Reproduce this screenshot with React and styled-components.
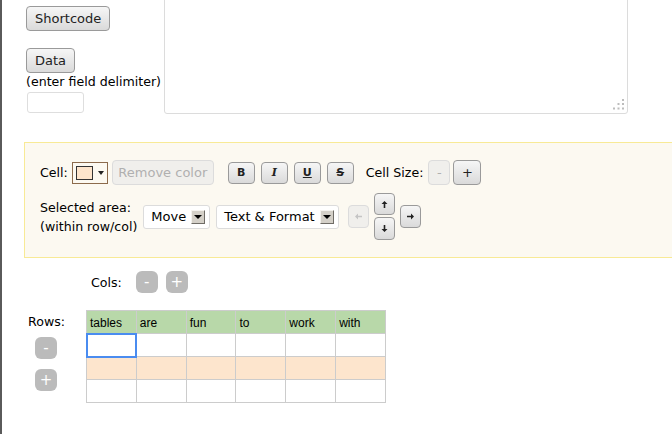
import React from 'react';
import styled, { createGlobalStyle } from 'styled-components';

const GlobalStyle = createGlobalStyle`
    html, body {
        margin: 0;
        padding: 0;
        background: #fff;
        overflow: hidden;
    }

    body {
        font-family: "DejaVu Sans", Verdana, sans-serif;
        font-size: 12.6px;
        color: #000;
    }
`;

const Page = styled.div`
    height: 434px;
    box-sizing: border-box;
    border-left: 2px solid #5a5a5a;
    overflow: hidden;
`;

const TopSection = styled.div`
    display: flex;
    align-items: flex-start;
    padding-left: 24px;
`;

const SideColumn = styled.div`
    width: 138px;
    padding-top: 6px;
    display: flex;
    flex-direction: column;
    align-items: flex-start;
`;

const Button = styled.button`
    font-family: "DejaVu Sans", Verdana, sans-serif;
    font-size: 13px;
    height: ${(p) => p.$h || 25}px;
    min-width: ${(p) => p.$w || 0}px;
    padding: 0 ${(p) => (p.$w ? 0 : 8)}px;
    margin-top: ${(p) => p.$mt || 0}px;
    box-sizing: border-box;
    border: 1px solid ${(p) => (p.disabled ? '#dcdcdc' : '#9a9a9a')};
    border-radius: 4px;
    background: ${(p) => (p.disabled ? '#f0efec' : 'linear-gradient(#f6f6f6, #e8e8e8 50%, #dadada)')};
    color: ${(p) => (p.disabled ? '#b0b0b0' : '#222')};
    display: inline-flex;
    align-items: center;
    justify-content: center;
    flex-shrink: 0;
`;

const Hint = styled.div`
    margin-top: 1px;
    line-height: 15px;
    white-space: nowrap;
`;

const SmallInput = styled.input`
    margin: 3px 0 0 1px;
    width: 57px;
    height: 21px;
    box-sizing: border-box;
    border: 1px solid #dedede;
    border-radius: 3px;
    background: #fff;
`;

const AreaWrap = styled.div`
    position: relative;
    margin-top: -6px;
`;

const TextArea = styled.textarea`
    display: block;
    width: 464px;
    height: 120px;
    box-sizing: border-box;
    border: 1px solid #dcdcdc;
    border-radius: 3px;
    resize: none;
    background: #fff;
`;

const Grip = styled.svg`
    position: absolute;
    right: 4px;
    bottom: 4px;
`;

const Panel = styled.div`
    margin: 28px 0 0 22px;
    width: 700px;
    height: 116px;
    box-sizing: border-box;
    border: 1px solid #f8ea96;
    background: #fcf9f1;
    padding: 17px 0 0 15px;
`;

const ToolRow = styled.div`
    display: flex;
    align-items: center;
    margin-top: ${(p) => p.$mt || 0}px;
`;

const Label = styled.span`
    white-space: nowrap;
    line-height: ${(p) => p.$lh || 15}px;
    margin-right: ${(p) => p.$mr || 0}px;
`;

const Swatch = styled.div`
    width: 36px;
    height: 22px;
    box-sizing: border-box;
    border: 1px solid #8c6b4c;
    display: flex;
    align-items: center;
    padding-left: 3px;
    gap: 5px;
    margin-right: 4px;
    background: #fcf9f1;

    & > i {
        display: block;
        width: 17px;
        height: 14px;
        box-sizing: border-box;
        border: 1px solid #333;
        background: #fde5cc;
    }
`;

const Caret = styled.span`
    width: 0;
    height: 0;
    border-left: 3px solid transparent;
    border-right: 3px solid transparent;
    border-top: 4px solid #222;
`;

const FormatButton = styled(Button)`
    width: 27px;
    height: 22px;
    padding: 0;
    font-size: 11px;
    font-weight: bold;
    margin-right: ${(p) => p.$mr || 6}px;
    font-style: ${(p) => (p.$italic ? 'italic' : 'normal')};
    text-decoration: ${(p) => p.$deco || 'none'};
`;

const Select = styled.div`
    display: flex;
    align-items: center;
    height: 24px;
    box-sizing: border-box;
    border: 1px solid #dcdcdc;
    border-radius: 3px;
    background: #fff;
    font-size: 13px;
    padding: 0 4px 0 7px;
    gap: 5px;
    margin-right: ${(p) => p.$mr || 0}px;
    white-space: nowrap;
`;

const DropBox = styled.span`
    width: 14px;
    height: 14px;
    box-sizing: border-box;
    background: #d4d0c8;
    border: 1px solid;
    border-color: #f4f2ee #6f6c66 #6f6c66 #f4f2ee;
    display: flex;
    align-items: center;
    justify-content: center;

    &::after {
        content: '';
        border-left: 4px solid transparent;
        border-right: 4px solid transparent;
        border-top: 4px solid #000;
    }
`;

const ArrowStack = styled.div`
    display: flex;
    flex-direction: column;
    gap: 2px;
    margin: 0 5px;
`;

const ArrowButton = styled(Button)`
    width: 21px;
    height: ${(p) => p.$h || 23}px;
    padding: 0;
`;

const CountRow = styled.div`
    display: flex;
    align-items: center;
    margin-top: 13px;
    padding-left: 89px;
`;

const RoundButton = styled.button`
    width: 22px;
    height: 22px;
    padding: 0;
    border: none;
    border-radius: 6px;
    background: #bbbbbb;
    color: #fff;
    font-family: "DejaVu Sans", Verdana, sans-serif;
    font-size: 15px;
    line-height: 22px;
    margin-left: ${(p) => p.$ml || 0}px;
    margin-top: ${(p) => p.$mt || 0}px;
`;

const TableSection = styled.div`
    display: flex;
    align-items: flex-start;
    margin-top: 17px;
    padding-left: 26px;
`;

const RowsColumn = styled.div`
    width: 40px;
    padding-top: 4px;
    display: flex;
    flex-direction: column;
    align-items: flex-start;
    margin-right: 18px;

    & > button {
        margin-left: 7px;
    }
`;

const Grid = styled.table`
    border-collapse: collapse;
    table-layout: fixed;
    width: 300px;
    font-family: "Liberation Sans", Arial, sans-serif;
    font-size: 12px;
`;

const Cell = styled.td`
    height: 23px;
    box-sizing: border-box;
    border: 1px solid #cccccc;
    padding: 1px 0 0 3px;
    background: ${(p) => p.$bg || '#fff'};
    outline: ${(p) => (p.$active ? '2px solid #4a8cf0' : 'none')};
    outline-offset: -1px;
`;

function Arrow({ dir, color }) {
    const rot = { up: 0, right: 90, down: 180, left: 270 }[dir];
    return (
        <svg width="9" height="9" viewBox="0 0 9 9" style={{ transform: `rotate(${rot}deg)` }}>
            <path d="M4.5 1 L1.5 4 H3.7 V8 H5.3 V4 H7.5 Z" fill={color} />
        </svg>
    );
}

const header = ['tables', 'are', 'fun', 'to', 'work', 'with'];
const rows = [{ bg: '#fff' }, { bg: '#fde5cd' }, { bg: '#fff' }];

function App() {
    return (
        <Page>
            <GlobalStyle />
            <TopSection>
                <SideColumn>
                    <Button>Shortcode</Button>
                    <Button $mt={17}>Data</Button>
                    <Hint>(enter field delimiter)</Hint>
                    <SmallInput />
                </SideColumn>
                <AreaWrap>
                    <TextArea />
                    <Grip width="11" height="11" viewBox="0 0 11 11">
                        <rect x="9" y="0" width="2" height="2" fill="#bdbdbd" />
                        <rect x="4.5" y="4" width="2" height="2" fill="#bdbdbd" />
                        <rect x="9" y="4" width="2" height="2" fill="#bdbdbd" />
                        <rect x="0" y="8.5" width="2" height="2" fill="#bdbdbd" />
                        <rect x="4.5" y="8.5" width="2" height="2" fill="#bdbdbd" />
                        <rect x="9" y="8.5" width="2" height="2" fill="#bdbdbd" />
                    </Grip>
                </AreaWrap>
            </TopSection>

            <Panel>
                <ToolRow>
                    <Label $mr={4}>Cell:</Label>
                    <Swatch>
                        <i />
                        <Caret />
                    </Swatch>
                    <Button disabled $w={102} style={{ marginRight: 14 }}>Remove color</Button>
                    <FormatButton>B</FormatButton>
                    <FormatButton $italic style={{ fontFamily: '"DejaVu Serif", serif' }}>I</FormatButton>
                    <FormatButton $deco="underline">U</FormatButton>
                    <FormatButton $deco="line-through" $mr={12}>S</FormatButton>
                    <Label $mr={5}>Cell Size:</Label>
                    <Button disabled $w={22} style={{ marginRight: 3, padding: 0 }}>-</Button>
                    <Button $w={28} style={{ padding: 0 }}>+</Button>
                </ToolRow>
                <ToolRow $mt={8}>
                    <Label $lh={19} $mr={6}>
                        Selected area:
                        <br />
                        (within row/col)
                    </Label>
                    <Select $mr={6}>
                        Move
                        <DropBox />
                    </Select>
                    <Select $mr={9}>
                        Text &amp; Format
                        <DropBox />
                    </Select>
                    <ArrowButton disabled>
                        <Arrow dir="left" color="#c4c4c4" />
                    </ArrowButton>
                    <ArrowStack>
                        <ArrowButton $h={22}>
                            <Arrow dir="up" color="#222" />
                        </ArrowButton>
                        <ArrowButton $h={23}>
                            <Arrow dir="down" color="#222" />
                        </ArrowButton>
                    </ArrowStack>
                    <ArrowButton>
                        <Arrow dir="right" color="#222" />
                    </ArrowButton>
                </ToolRow>
            </Panel>

            <CountRow>
                <Label $mr={14}>Cols:</Label>
                <RoundButton>-</RoundButton>
                <RoundButton $ml={8}>+</RoundButton>
            </CountRow>

            <TableSection>
                <RowsColumn>
                    <Label>Rows:</Label>
                    <RoundButton $mt={8}>-</RoundButton>
                    <RoundButton $mt={10}>+</RoundButton>
                </RowsColumn>
                <Grid>
                    <tbody>
                        <tr>
                            {header.map((h) => (
                                <Cell key={h} $bg="#b8d8a9">{h}</Cell>
                            ))}
                        </tr>
                        {rows.map((r, i) => (
                            <tr key={i}>
                                {header.map((h, j) => (
                                    <Cell key={h} $bg={r.bg} $active={i === 0 && j === 0} />
                                ))}
                            </tr>
                        ))}
                    </tbody>
                </Grid>
            </TableSection>
        </Page>
    );
}

export default App;
